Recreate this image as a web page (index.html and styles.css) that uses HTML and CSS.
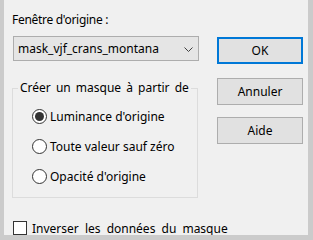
FILE: index.html
```html
<!DOCTYPE html>
<html lang="fr">
<head>
    <meta charset="UTF-8">
    <title>Masque à partir d'une image</title>
    <link rel="stylesheet" href="styles.css">
</head>
<body>
    <div class="dialog">
        <div class="main">
            <div class="field-label">Fenêtre d'origine :</div>
            <div class="combo">
                <span class="combo-text">mask_vjf_crans_montana</span>
                <svg class="chevron" width="9" height="5" viewBox="0 0 9 5">
                    <polyline points="0.5,0.5 4.5,4.5 8.5,0.5" fill="none" stroke="#404040" stroke-width="1"/>
                </svg>
            </div>

            <fieldset class="group">
                <legend>Créer un masque à partir de</legend>
                <label class="radio-row">
                    <span class="radio checked"></span>
                    <span>Luminance d'origine</span>
                </label>
                <label class="radio-row">
                    <span class="radio"></span>
                    <span>Toute valeur sauf zéro</span>
                </label>
                <label class="radio-row">
                    <span class="radio"></span>
                    <span>Opacité d'origine</span>
                </label>
            </fieldset>

            <label class="check-row">
                <span class="checkbox"></span>
                <span>Inverser les données du masque</span>
            </label>
        </div>

        <div class="buttons">
            <button class="btn default">OK</button>
            <button class="btn cancel">Annuler</button>
            <button class="btn help">Aide</button>
        </div>
    </div>
</body>
</html>
```

FILE: styles.css
```css
body {
    margin: 0;
    background-color: #cbcbcb;
    font-family: "Noto Sans", "Open Sans", Arial, sans-serif;
    font-size: 12px;
    color: #000;
}

.dialog {
    display: flex;
    margin-left: 4px;
    width: 304px;
    height: 235px;
    background-color: #f0f0f0;
}

.main {
    width: 196px;
    flex-shrink: 0;
    padding-left: 8px;
    box-sizing: border-box;
    display: flex;
    flex-direction: column;
}

.field-label {
    margin-top: 12px;
    line-height: 16px;
    letter-spacing: -0.3px;
}

.combo {
    display: flex;
    align-items: center;
    justify-content: space-between;
    box-sizing: border-box;
    margin-top: 8px;
    margin-left: 1px;
    width: 186px;
    height: 25px;
    padding: 0 5px 0 4px;
    background-color: #e5e5e5;
    border: 1px solid #adadad;
}

.chevron {
    display: block;
    margin-top: 1px;
}

.group {
    box-sizing: border-box;
    margin: 19px 0 0 0;
    padding: 5px 0 0 0;
    width: 186px;
    height: 118px;
    min-width: 0;
    border: 1px solid #dcdcdc;
}

.group legend {
    margin-left: 5px;
    padding: 0 2px;
    line-height: 16px;
    white-space: nowrap;
    word-spacing: 2px;
}

.radio-row {
    display: flex;
    align-items: center;
    height: 30px;
    padding-left: 19px;
}

.radio {
    box-sizing: border-box;
    flex-shrink: 0;
    width: 15px;
    height: 15px;
    margin-right: 3px;
    border: 1px solid #333;
    border-radius: 50%;
    background-color: #fff;
    display: flex;
    align-items: center;
    justify-content: center;
}

.radio.checked::after {
    content: "";
    width: 9px;
    height: 9px;
    border-radius: 50%;
    background-color: #333;
}

.check-row {
    display: flex;
    align-items: center;
    margin-top: 23px;
    margin-left: 1px;
    height: 14px;
    white-space: nowrap;
    word-spacing: 3px;
}

.checkbox {
    box-sizing: border-box;
    flex-shrink: 0;
    width: 14px;
    height: 14px;
    margin-right: 5px;
    border: 1px solid #333;
    background-color: #fff;
}

.buttons {
    display: flex;
    flex-direction: column;
    margin-left: 17px;
    padding-top: 37px;
}

.btn {
    box-sizing: border-box;
    width: 86px;
    height: 27px;
    font-family: inherit;
    font-size: 12px;
    color: #000;
    background-color: #e1e1e1;
    border: 1px solid #adadad;
    padding: 0;
}

.btn.default {
    border: 2px solid #0078d7;
}

.btn.cancel {
    margin-top: 14px;
}

.btn.help {
    margin-top: 12px;
}
```
